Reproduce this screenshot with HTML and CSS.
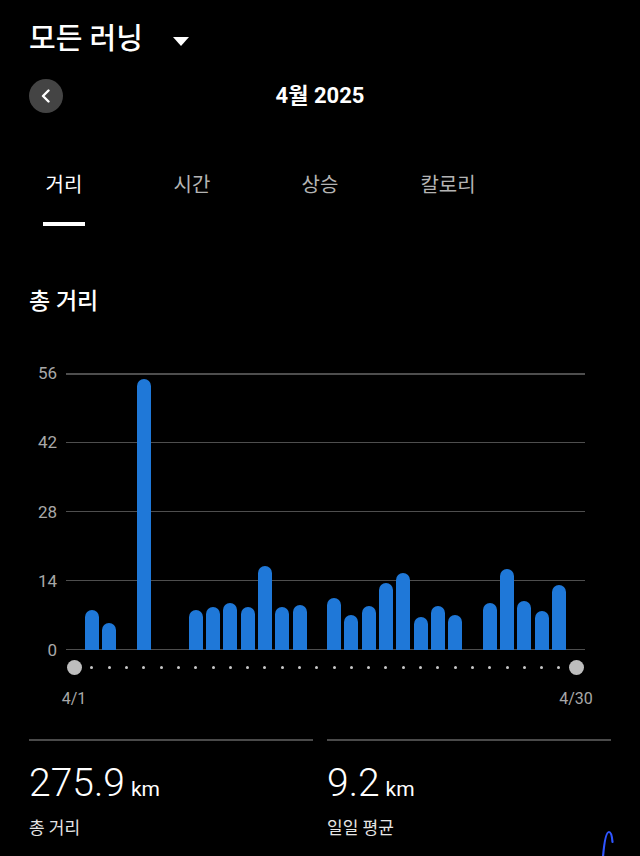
FILE: index.html
```html
<!DOCTYPE html>
<html lang="ko">
<head>
<meta charset="utf-8">
<title>모든 러닝</title>
<link rel="stylesheet" href="styles.css">
</head>
<body>
<div class="screen">
  <header class="top">
    <div class="title-row">
      <h1 class="title">모든 러닝</h1>
      <span class="caret"></span>
    </div>
    <div class="month-row">
      <button class="back" aria-label="이전">
        <svg width="12" height="14" viewBox="0 0 12 14"><path d="M8.5 1.5 L3 7 L8.5 12.5" fill="none" stroke="#fff" stroke-width="2.4" stroke-linecap="round" stroke-linejoin="round"/></svg>
      </button>
      <div class="month">4월 2025</div>
      <div></div>
    </div>
  </header>

  <nav class="tabs">
    <div class="tab active"><span>거리</span><i class="indicator"></i></div>
    <div class="tab"><span>시간</span></div>
    <div class="tab"><span>상승</span></div>
    <div class="tab"><span>칼로리</span></div>
  </nav>

  <section class="chart-section">
    <h2 class="section-title">총 거리</h2>
    <div class="chart">
      <div class="y-labels">
        <span>56</span><span>42</span><span>28</span><span>14</span><span>0</span>
      </div>
      <div class="plot">
        <div class="grid-lines"><i></i><i></i><i></i><i></i><i></i></div>
        <div class="bars">
          <div class="slot"></div>
          <div class="slot"><div class="bar" style="height:40px"></div></div>
          <div class="slot"><div class="bar" style="height:26.7px"></div></div>
          <div class="slot"></div>
          <div class="slot"><div class="bar" style="height:270.7px"></div></div>
          <div class="slot"></div>
          <div class="slot"></div>
          <div class="slot"><div class="bar" style="height:40px"></div></div>
          <div class="slot"><div class="bar" style="height:43.3px"></div></div>
          <div class="slot"><div class="bar" style="height:47.3px"></div></div>
          <div class="slot"><div class="bar" style="height:42.7px"></div></div>
          <div class="slot"><div class="bar" style="height:84.3px"></div></div>
          <div class="slot"><div class="bar" style="height:43.3px"></div></div>
          <div class="slot"><div class="bar" style="height:45px"></div></div>
          <div class="slot"></div>
          <div class="slot"><div class="bar" style="height:52.3px"></div></div>
          <div class="slot"><div class="bar" style="height:35px"></div></div>
          <div class="slot"><div class="bar" style="height:44px"></div></div>
          <div class="slot"><div class="bar" style="height:66.7px"></div></div>
          <div class="slot"><div class="bar" style="height:77.3px"></div></div>
          <div class="slot"><div class="bar" style="height:33.3px"></div></div>
          <div class="slot"><div class="bar" style="height:44.3px"></div></div>
          <div class="slot"><div class="bar" style="height:34.7px"></div></div>
          <div class="slot"></div>
          <div class="slot"><div class="bar" style="height:46.7px"></div></div>
          <div class="slot"><div class="bar" style="height:80.7px"></div></div>
          <div class="slot"><div class="bar" style="height:49.3px"></div></div>
          <div class="slot"><div class="bar" style="height:39px"></div></div>
          <div class="slot"><div class="bar" style="height:65px"></div></div>
          <div class="slot"></div>
        </div>
      </div>
      <div></div>
      <div class="dots">
        <div class="slot"><i class="dot end"></i></div>
        <div class="slot"><i class="dot"></i></div>
        <div class="slot"><i class="dot"></i></div>
        <div class="slot"><i class="dot"></i></div>
        <div class="slot"><i class="dot"></i></div>
        <div class="slot"><i class="dot"></i></div>
        <div class="slot"><i class="dot"></i></div>
        <div class="slot"><i class="dot"></i></div>
        <div class="slot"><i class="dot"></i></div>
        <div class="slot"><i class="dot"></i></div>
        <div class="slot"><i class="dot"></i></div>
        <div class="slot"><i class="dot"></i></div>
        <div class="slot"><i class="dot"></i></div>
        <div class="slot"><i class="dot"></i></div>
        <div class="slot"><i class="dot"></i></div>
        <div class="slot"><i class="dot"></i></div>
        <div class="slot"><i class="dot"></i></div>
        <div class="slot"><i class="dot"></i></div>
        <div class="slot"><i class="dot"></i></div>
        <div class="slot"><i class="dot"></i></div>
        <div class="slot"><i class="dot"></i></div>
        <div class="slot"><i class="dot"></i></div>
        <div class="slot"><i class="dot"></i></div>
        <div class="slot"><i class="dot"></i></div>
        <div class="slot"><i class="dot"></i></div>
        <div class="slot"><i class="dot"></i></div>
        <div class="slot"><i class="dot"></i></div>
        <div class="slot"><i class="dot"></i></div>
        <div class="slot"><i class="dot"></i></div>
        <div class="slot"><i class="dot end"></i></div>
      </div>
      <div></div>
      <div class="date-labels"><span>4/1</span><span>4/30</span></div>
    </div>
  </section>

  <section class="stats">
    <div class="stat">
      <div class="stat-value"><span class="num">275.9</span><span class="unit">km</span></div>
      <div class="stat-label">총 거리</div>
    </div>
    <div class="stat">
      <div class="stat-value"><span class="num">9.2</span><span class="unit">km</span></div>
      <div class="stat-label">일일 평균</div>
    </div>
  </section>

  <svg class="scribble" width="24" height="30" viewBox="0 0 24 30"><path d="M7 31 C8 19 10 6 13 6 C15 6 16 10 16.5 16" fill="none" stroke="#2f55ff" stroke-width="2.2" stroke-linecap="round"/></svg>
</div>
</body>
</html>
```

FILE: styles.css
```css
* { box-sizing: border-box; }

html, body {
  margin: 0;
  padding: 0;
  background: #000;
}

body {
  font-family: Roboto, "Noto Sans CJK KR", sans-serif;
  color: #fff;
}

.screen {
  position: relative;
  width: 640px;
  height: 856px;
  overflow: hidden;
  background: #000;
}

/* header */
.top {
  padding: 21px 29px 0;
}

.title-row {
  display: flex;
  align-items: center;
  height: 36px;
}

.title {
  margin: 0;
  font-size: 29px;
  font-weight: 500;
  line-height: 36px;
}

.caret {
  width: 0;
  height: 0;
  border-left: 8px solid transparent;
  border-right: 8px solid transparent;
  border-top: 9px solid #fff;
  margin-left: 30px;
  margin-top: 4px;
}

.month-row {
  display: grid;
  grid-template-columns: 1fr auto 1fr;
  align-items: center;
  height: 34px;
  margin-top: 22px;
}

.back {
  width: 34px;
  height: 34px;
  border: none;
  border-radius: 50%;
  background: #444;
  padding: 0;
  display: flex;
  align-items: center;
  justify-content: center;
}

.month {
  font-size: 22px;
  font-weight: 700;
  line-height: 34px;
}

/* tabs */
.tabs {
  display: flex;
  margin-top: 58px;
}

.tab {
  width: 128px;
  display: flex;
  flex-direction: column;
  align-items: center;
  font-size: 20px;
  line-height: 28px;
  color: #b4b4b4;
}

.tab.active {
  color: #fff;
}

.indicator {
  display: block;
  width: 42px;
  height: 4px;
  background: #fff;
  margin-top: 23px;
}

/* chart */
.chart-section {
  padding: 0 29px;
  margin-top: 61px;
}

.section-title {
  margin: 0;
  font-size: 23px;
  font-weight: 500;
  line-height: 30px;
}

.chart {
  display: grid;
  grid-template-columns: 28px 519px;
  column-gap: 9px;
  margin-top: 56px;
}

.y-labels {
  height: 277px;
  display: flex;
  flex-direction: column;
  justify-content: space-between;
  align-items: flex-end;
  font-size: 17px;
  line-height: 0;
  color: #a8a8a8;
}

.y-labels span {
  display: block;
  height: 0;
}

.plot {
  display: grid;
  height: 277px;
}

.plot > * {
  grid-area: 1 / 1;
}

.grid-lines {
  display: flex;
  flex-direction: column;
  justify-content: space-between;
}

.grid-lines i {
  display: block;
  height: 1.5px;
  background: #4e4e4e;
}

.bars {
  display: flex;
  align-items: flex-end;
}

.slot {
  flex: 1;
  display: flex;
  justify-content: center;
  align-items: center;
}

.bars .slot {
  align-items: flex-end;
  height: 100%;
}

.bar {
  width: 14px;
  border-radius: 7px 7px 0 0;
  background: #1f78d8;
}

.dots {
  display: flex;
  height: 15px;
  margin-top: 10px;
}

.dot {
  display: block;
  width: 3px;
  height: 3px;
  border-radius: 50%;
  background: #c8c8c8;
}

.dot.end {
  width: 15px;
  height: 15px;
  background: #bdbdbd;
}

.date-labels {
  display: flex;
  justify-content: space-between;
  margin: 14px -11px 0 -12px;
  font-size: 16px;
  line-height: 20px;
  color: #a8a8a8;
}

.date-labels span {
  width: 40px;
  text-align: center;
}

/* stats */
.stats {
  display: grid;
  grid-template-columns: 1fr 1fr;
  column-gap: 14px;
  padding: 0 29px;
  margin-top: 30px;
}

.stat {
  border-top: 2px solid #4a4a4a;
  padding-top: 20px;
}

.stat-value {
  line-height: 44px;
  white-space: nowrap;
}

.num {
  font-size: 39px;
  font-weight: 300;
}

.unit {
  font-size: 21px;
  line-height: 1;
  margin-left: 6px;
}

.stat-label {
  margin-top: 3px;
  font-size: 17px;
  line-height: 24px;
  color: #e6e6e6;
}

.scribble {
  position: absolute;
  left: 596px;
  top: 826px;
}
```
